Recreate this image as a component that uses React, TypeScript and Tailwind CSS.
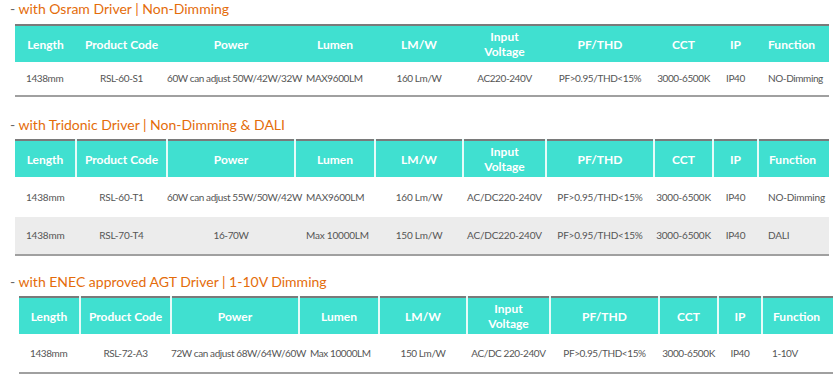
import React from "react";

const widths = [61, 91, 128, 80, 88, 83, 108, 59, 45, 71];
const widths3 = [61, 91, 128, 80, 88, 83, 109, 59, 44, 71];
const headers = ["Length", "Product Code", "Power", "Lumen", "LM/W", "Input Voltage", "PF/THD", "CCT", "IP", "Function"];
const bodyAlign = ["text-left pl-[11px]", "text-center", "text-center", "text-left pl-[11px]", "text-center", "text-center", "text-center", "text-center", "text-center", "text-left pl-[10px]"];
const headAlign = ["text-center", "text-center", "text-center", "text-center", "text-center", "text-center", "text-center", "text-center", "text-center", "text-left pl-[10px]"];

type Row = { cells: string[]; h: number; gray?: boolean; wide?: boolean };

function Table({ rows, dividers, w, ml }: { rows: Row[]; dividers: boolean; w: number[]; ml: string }) {
  return (
    <table
      className={`${ml} border-collapse table-fixed border-t-2 border-t-[#7a7a7a] border-b-2 border-b-[#a0a0a0]`}
      style={{ width: w.reduce((a, b) => a + b, 0) }}
    >
      <colgroup>
        {w.map((x, i) => (
          <col key={i} style={{ width: x }} />
        ))}
      </colgroup>
      <thead>
        <tr className="h-[37px] bg-[#40e0d0]">
          {headers.map((h, i) => (
            <th
              key={i}
              className={`${headAlign[i]} p-0 align-middle text-white font-bold text-[12px] leading-[15px] ${
                dividers && i > 0 ? "border-l-2 border-l-[#e6fbf8]" : ""
              }`}
            >
              {h === "Input Voltage" ? (
                <span>
                  Input
                  <br />
                  Voltage
                </span>
              ) : (
                h
              )}
            </th>
          ))}
        </tr>
      </thead>
      <tbody>
        {rows.map((r, ri) => (
          <tr key={ri} className={r.gray ? "bg-[#ececec]" : "bg-white"} style={{ height: r.h }}>
            {r.cells.map((c, i) => (
              <td
                key={i}
                className={`${bodyAlign[i]} p-0 align-middle whitespace-nowrap text-[10px] text-[#555555] ${
                  r.wide && i !== 2 ? "tracking-[-0.2px]" : "tracking-[-0.4px]"
                }`}
              >
                {c}
              </td>
            ))}
          </tr>
        ))}
      </tbody>
    </table>
  );
}

function Heading({ text, className }: { text: string; className: string }) {
  return (
    <div className={`${className} pl-[10px] text-[14px] leading-[18px] whitespace-nowrap`}>
      <span className="text-[#666]">- </span>
      <span className="text-[#e46c0a]">{text}</span>
    </div>
  );
}

export default function App() {
  return (
    <div
      className="w-[840px] h-[378px] bg-white overflow-hidden"
      style={{ fontFamily: "Lato, 'Open Sans', sans-serif" }}
    >
      <Heading text="with Osram Driver | Non-Dimming" className="pt-0 mb-[6px]" />
      <Table
        ml="ml-[15px]"
        w={widths}
        dividers={false}
        rows={[
          {
            h: 34,
            cells: ["1438mm", "RSL-60-S1", "60W can adjust 50W/42W/32W", "MAX9600LM", "160 Lm/W", "AC220-240V", "PF>0.95/THD<15%", "3000-6500K", "IP40", "NO-Dimming"],
          },
        ]}
      />
      <Heading text="with Tridonic Driver | Non-Dimming & DALI" className="mt-[19px] mb-[5px]" />
      <Table
        ml="ml-[15px]"
        w={widths}
        dividers={true}
        rows={[
          {
            h: 40,
            wide: true,
            cells: ["1438mm", "RSL-60-T1", "60W can adjust 55W/50W/42W", "MAX9600LM", "160 Lm/W", "AC/DC220-240V", "PF>0.95/THD<15%", "3000-6500K", "IP40", "NO-Dimming"],
          },
          {
            h: 38,
            gray: true,
            wide: true,
            cells: ["1438mm", "RSL-70-T4", "16-70W", "Max 10000LM", "150 Lm/W", "AC/DC220-240V", "PF>0.95/THD<15%", "3000-6500K", "IP40", "DALI"],
          },
        ]}
      />
      <Heading text="with ENEC approved AGT Driver | 1-10V Dimming" className="mt-[17px] mb-[5px]" />
      <Table
        ml="ml-[19px]"
        w={widths3}
        dividers={true}
        rows={[
          {
            h: 39,
            cells: ["1438mm", "RSL-72-A3", "72W can adjust 68W/64W/60W", "Max 10000LM", "150 Lm/W", "AC/DC 220-240V", "PF>0.95/THD<15%", "3000-6500K", "IP40", "1-10V"],
          },
        ]}
      />
    </div>
  );
}
